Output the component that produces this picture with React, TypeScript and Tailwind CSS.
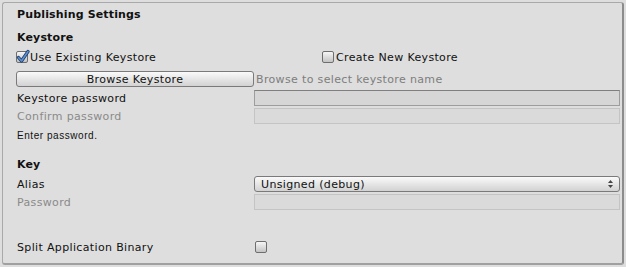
import React from 'react';

function Check({ checked }: { checked?: boolean }) {
  return (
    <span className="relative inline-block w-[12px] h-[12px] rounded-[2px] border border-[#6e6e6e] bg-gradient-to-b from-[#f6f6f6] to-[#c4c4c4] shrink-0">
      {checked && (
        <svg className="absolute -left-[1px] -top-[3px]" width="14" height="15" viewBox="0 0 14 15">
          <path d="M2.5 8.5 L5.5 12 L12 2.5" fill="none" stroke="#1d3f6e" strokeWidth="3.2" strokeLinecap="round" strokeLinejoin="round" />
          <path d="M2.5 8.5 L5.5 12 L12 2.5" fill="none" stroke="#5f8fd0" strokeWidth="1.6" strokeLinecap="round" strokeLinejoin="round" />
        </svg>
      )}
    </span>
  );
}

function Field({ disabled }: { disabled?: boolean }) {
  return (
    <div
      className={`w-[366px] h-[16px] ${
        disabled
          ? 'border border-[#c4c4c4] bg-[#dadada]'
          : 'border border-[#9d9d9d] border-t-[#7f7f7f] bg-[#d6d6d6]'
      }`}
    />
  );
}

export default function App() {
  return (
    <div className="w-[626px] h-[267px] bg-[#dedede] p-[2px] text-[11px] leading-[16px] text-[#111] tracking-[0.35px] font-['DejaVu_Sans',sans-serif]">
      <div className="h-[263px] w-[622px] rounded-[3px] border border-[#a9a9a9] border-r-2 border-r-[#8c8c8c] border-b-2 border-b-[#a0a0a0] pl-[14px] pr-[1px]">
        <div className="mt-[4px] h-[16px] font-bold tracking-[0.15px]">Publishing Settings</div>
        <div className="mt-[7px] h-[16px] font-bold tracking-[0.15px]">Keystore</div>

        <div className="mt-[3px] h-[16px] flex items-center">
          <div className="w-[306px] flex items-center gap-[2px] -ml-[1px]">
            <Check checked />
            <span className="pt-[2px]">Use Existing Keystore</span>
          </div>
          <div className="flex items-center gap-[2px]">
            <Check />
            <span className="pt-[2px]">Create New Keystore</span>
          </div>
        </div>

        <div className="mt-[6px] h-[16px] flex items-center">
          <button className="-ml-[1px] w-[238px] h-[16px] rounded-[3px] border border-[#7a7a7a] bg-gradient-to-b from-[#fafafa] to-[#d2d2d2] text-[11px] leading-[14px] pt-[1px] text-[#111] tracking-[0.35px]">
            Browse Keystore
          </button>
          <span className="ml-[2px] pt-[2px] text-[#7d7d7d]">Browse to select keystore name</span>
        </div>

        <div className="mt-[3px] h-[16px] flex items-center">
          <span className="w-[237px] pt-[2px]">Keystore password</span>
          <Field />
        </div>
        <div className="mt-[2px] h-[16px] flex items-center">
          <span className="w-[237px] pt-[2px] text-[#8a8a8a]">Confirm password</span>
          <Field disabled />
        </div>

        <div className="mt-[3px] h-[16px] flex items-center pt-[2px] text-[10px] font-['Liberation_Sans',sans-serif] text-[#111] tracking-[0.55px]">
          Enter password.
        </div>

        <div className="mt-[13px] h-[16px] pt-[1px] font-bold tracking-[0.15px]">Key</div>

        <div className="mt-[4px] h-[16px] flex items-center">
          <span className="w-[237px] pt-[2px]">Alias</span>
          <div className="w-[366px] h-[16px] rounded-[3px] border border-[#7a7a7a] bg-gradient-to-b from-[#fafafa] to-[#d2d2d2] flex items-center justify-between pl-[6px] pr-[6px]">
            <span className="leading-[14px] pt-[1px]">Unsigned (debug)</span>
            <svg width="5" height="8" viewBox="0 0 5 8">
              <path d="M0 3 L2.5 0 L5 3 Z" fill="#444" />
              <path d="M0 5 L2.5 8 L5 5 Z" fill="#444" />
            </svg>
          </div>
        </div>
        <div className="mt-[2px] h-[16px] flex items-center">
          <span className="w-[237px] pt-[2px] text-[#8a8a8a]">Password</span>
          <Field disabled />
        </div>

        <div className="mt-[29px] h-[16px] flex items-center">
          <span className="w-[238px] pt-[2px]">Split Application Binary</span>
          <Check />
        </div>
      </div>
    </div>
  );
}
